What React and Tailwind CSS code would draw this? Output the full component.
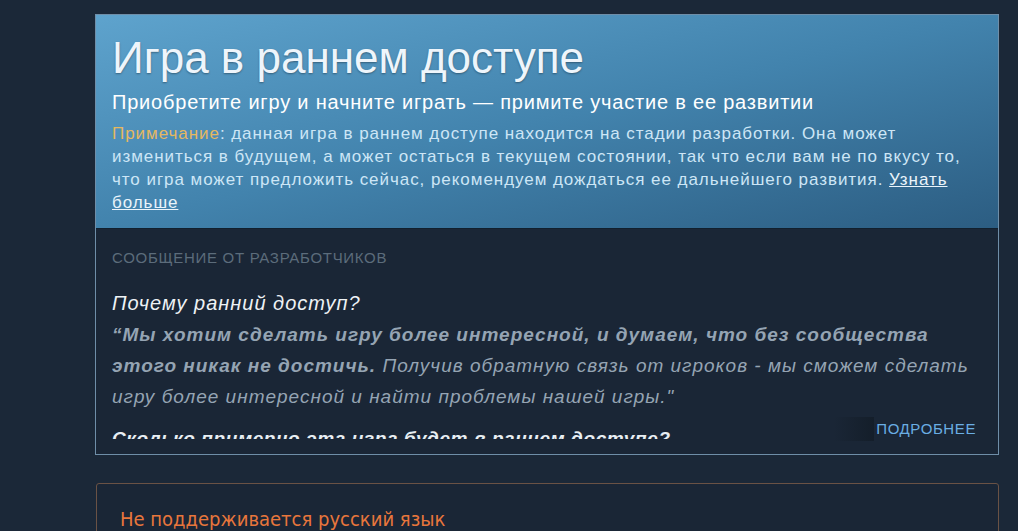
import React from "react";

function EarlyAccessPanel() {
  return (
    <div className="ml-[95px] w-[904px] border border-[#6f8ea8] bg-[#1a2636]">
      {/* верхняя синяя часть */}
      <div className="bg-gradient-to-br from-[#5ea3cd] via-[#4283ad] to-[#2c5d82] px-[16px] pt-[18px] pb-[14px] border-b border-[#12202e]">
        <h1 className="text-[44px] leading-[50px] text-[#eef5fb] [text-shadow:0_1px_2px_rgba(0,0,0,0.35)]">
          Игра в раннем доступе
        </h1>
        <p className="mt-[7px] text-[20px] leading-[24px] tracking-[0.8px] text-white">
          Приобретите игру и начните играть — примите участие в ее развитии
        </p>
        <p className="mt-[8px] text-[17px] leading-[23px] tracking-[0.95px] text-[#cde6f6]">
          <span className="text-[#e6b860]">Примечание</span>: данная игра в раннем доступе находится на стадии разработки. Она может измениться в будущем, а может остаться в текущем состоянии, так что если вам не по вкусу то, что игра может предложить сейчас, рекомендуем дождаться ее дальнейшего развития.{" "}
          <a href="#" className="text-[#eaf4fb] underline">
            Узнать больше
          </a>
        </p>
      </div>

      {/* сообщение от разработчиков */}
      <div className="px-[16px] pt-[20px] pb-[15px]">
        <div className="text-[15px] leading-[18px] tracking-[0.7px] uppercase text-[#5c6c7b]">
          Сообщение от разработчиков
        </div>
        <div className="relative mt-[24px]">
          <div className="h-[148px] overflow-hidden">
            <div className="italic text-[20px] leading-[24px] tracking-[1px] text-[#eef2f5]">
              Почему ранний доступ?
            </div>
            <p className="mt-[4px] italic text-[19px] leading-[31px] tracking-[1px] text-[#95a4b3]">
              <span className="font-bold">
                “Мы хотим сделать игру более интересной, и думаем, что без сообщества этого никак не достичь.
              </span>{" "}
              Получив обратную связь от игроков - мы сможем сделать игру более интересной и найти проблемы нашей игры."
            </p>
            <div className="mt-[15px] italic font-bold text-[19px] leading-[24px] tracking-[0.6px] text-[#e8eef3]">
              Сколько примерно эта игра будет в раннем доступе?
            </div>
          </div>
          <div className="absolute right-[6px] bottom-[-2px] flex items-center">
            <div className="w-[40px] h-[24px] bg-gradient-to-r from-transparent to-[#141e2a]"></div>
            <a href="#" className="bg-[#1a2636] pl-[2px] h-[24px] flex items-center text-[15px] tracking-[0.6px] uppercase text-[#6aaee4]">
              Подробнее
            </a>
          </div>
        </div>
      </div>
    </div>
  );
}

export default function App() {
  return (
    <div className="h-[531px] overflow-hidden bg-[#1b2838] pt-[14px] font-['Liberation_Sans',Arial,sans-serif]">
      <EarlyAccessPanel />

      {/* блок о языке */}
      <div className="ml-[96px] mt-[28px] w-[903px] h-[80px] rounded-[3px] border border-[#6a5245] bg-[#1a2636] px-[23px] pt-[23px]">
        <div className="font-['Liberation_Sans_Narrow','DejaVu_Sans_Condensed',sans-serif] text-[20px] leading-[24px] text-[#e8763c]">
          Не поддерживается русский язык
        </div>
      </div>
    </div>
  );
}
